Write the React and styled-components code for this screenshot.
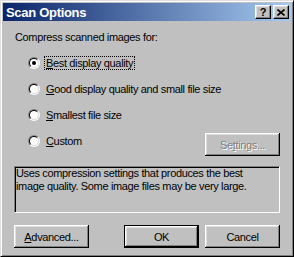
import React from "react";
import styled, { createGlobalStyle } from "styled-components";

const GlobalStyle = createGlobalStyle`
  html, body {
    margin: 0;
    padding: 0;
    background: #c0c0c0;
  }
  body {
    font-family: "Liberation Sans", Arial, sans-serif;
    font-size: 11px;
    letter-spacing: -0.35px;
    color: #000;
  }
`;

const StyledWindow = styled.div`
  box-sizing: border-box;
  width: 294px;
  height: 257px;
  display: flex;
  flex-direction: column;
  background: #c0c0c0;
  border: 1px solid;
  border-color: #dfdfdf #000 #000 #dfdfdf;
  box-shadow: inset 1px 1px #fff, inset -1px -1px #808080;
  padding: 2px;
`;

const StyledTitleBar = styled.div`
  height: 18px;
  display: flex;
  align-items: center;
  padding: 0 2px 0 3px;
  background: linear-gradient(to right, #0a246a, #a6caf0);
  color: #fff;
  font-weight: bold;
  font-size: 13px;
  letter-spacing: -0.3px;
`;

const StyledTitle = styled.span`
  flex: 1;
`;

const StyledCaptionButton = styled.div`
  box-sizing: border-box;
  width: 16px;
  height: 14px;
  margin-left: ${(props) => props.$gap || 0}px;
  display: flex;
  align-items: center;
  justify-content: center;
  background: #c0c0c0;
  color: #000;
  font-size: 11px;
  font-weight: bold;
  letter-spacing: 0;
  border: 1px solid;
  border-color: #fff #000 #000 #fff;
  box-shadow: inset -1px -1px #808080, inset 1px 1px #dfdfdf;
`;

const StyledBody = styled.div`
  display: flex;
  flex-direction: column;
  padding: 10px 11px 0 11px;
  line-height: 13px;
`;

const StyledPrompt = styled.div`
  padding-left: 1px;
`;

const StyledRadioList = styled.div`
  display: flex;
  flex-direction: column;
  gap: 12px;
  margin-top: 12px;
  padding-left: 14px;
`;

const StyledRadioRow = styled.div`
  display: flex;
  align-items: flex-start;
  height: ${(props) => (props.$tall ? 23 : 14)}px;
`;

const StyledRadio = styled.span`
  position: relative;
  box-sizing: border-box;
  flex: none;
  width: 12px;
  height: 12px;
  margin-top: 1px;
  border-radius: 50%;
  border: 1px solid;
  border-color: #808080 #fff #fff #808080;

  &::before {
    content: "";
    position: absolute;
    inset: 0;
    box-sizing: border-box;
    border-radius: 50%;
    border: 1px solid;
    border-color: #000 #dfdfdf #dfdfdf #000;
    background: #fff;
  }

  &::after {
    content: "";
    display: ${(props) => (props.$checked ? "block" : "none")};
    position: absolute;
    left: 3px;
    top: 3px;
    width: 4px;
    height: 4px;
    border-radius: 50%;
    background: #000;
  }
`;

const StyledRadioLabel = styled.span`
  margin-left: 4px;
  padding: 0 1px;
  height: 12px;
  line-height: 12px;
  border: 1px dotted ${(props) => (props.$focused ? "#000" : "transparent")};
  white-space: nowrap;
`;

const StyledSpacer = styled.div`
  flex: 1;
`;

const StyledButton = styled.button`
  box-sizing: border-box;
  width: 75px;
  height: 23px;
  padding: 0;
  margin-top: ${(props) => props.$offset || 0}px;
  margin-left: ${(props) => props.$gap || 0}px;
  font-family: inherit;
  font-size: 11px;
  letter-spacing: -0.35px;
  background: #c0c0c0;
  color: ${(props) => (props.disabled ? "#808080" : "#000")};
  text-shadow: ${(props) => (props.disabled ? "1px 1px #fff" : "none")};
  border: ${(props) => (props.$default ? "1px solid #000" : "none")};
  box-shadow: inset -1px -1px #000, inset 1px 1px #fff,
    inset -2px -2px #808080, inset 2px 2px #dfdfdf;
`;

const StyledInfoBox = styled.div`
  box-sizing: border-box;
  height: 47px;
  margin-top: 9px;
  padding: 0 1px;
  border: 1px solid;
  border-color: #808080 #fff #fff #808080;
  box-shadow: inset 1px 1px #000;
  line-height: 13px;
`;

const StyledButtonRow = styled.div`
  display: flex;
  margin-top: 12px;
`;

function Radio({ checked, focused, children }) {
  return (
    <StyledRadioRow>
      <StyledRadio $checked={checked} />
      <StyledRadioLabel $focused={focused}>{children}</StyledRadioLabel>
    </StyledRadioRow>
  );
}

export default function App() {
  return (
    <>
      <GlobalStyle />
      <StyledWindow>
        <StyledTitleBar>
          <StyledTitle>Scan Options</StyledTitle>
          <StyledCaptionButton>?</StyledCaptionButton>
          <StyledCaptionButton $gap={2}>
            <svg width="8" height="7" viewBox="0 0 8 7">
              <path d="M0.5 0.5 L7.5 6.5 M7.5 0.5 L0.5 6.5" stroke="#000" strokeWidth="1.6" />
            </svg>
          </StyledCaptionButton>
        </StyledTitleBar>
        <StyledBody>
          <StyledPrompt>Compress scanned images for:</StyledPrompt>
          <StyledRadioList>
            <Radio checked focused>
              <u>B</u>est display quality
            </Radio>
            <Radio>
              <u>G</u>ood display quality and small file size
            </Radio>
            <Radio>
              <u>S</u>mallest file size
            </Radio>
            <StyledRadioRow $tall>
              <StyledRadio />
              <StyledRadioLabel>
                <u>C</u>ustom
              </StyledRadioLabel>
              <StyledSpacer />
              <StyledButton disabled $offset={-1}>
                Se<u>t</u>tings...
              </StyledButton>
            </StyledRadioRow>
          </StyledRadioList>
          <StyledInfoBox>
            Uses compression settings that produces the best
            <br />
            image quality. Some image files may be very large.
          </StyledInfoBox>
          <StyledButtonRow>
            <StyledButton>
              <u>A</u>dvanced...
            </StyledButton>
            <StyledSpacer />
            <StyledButton $default>OK</StyledButton>
            <StyledButton $gap={6}>Cancel</StyledButton>
          </StyledButtonRow>
        </StyledBody>
      </StyledWindow>
    </>
  );
}
